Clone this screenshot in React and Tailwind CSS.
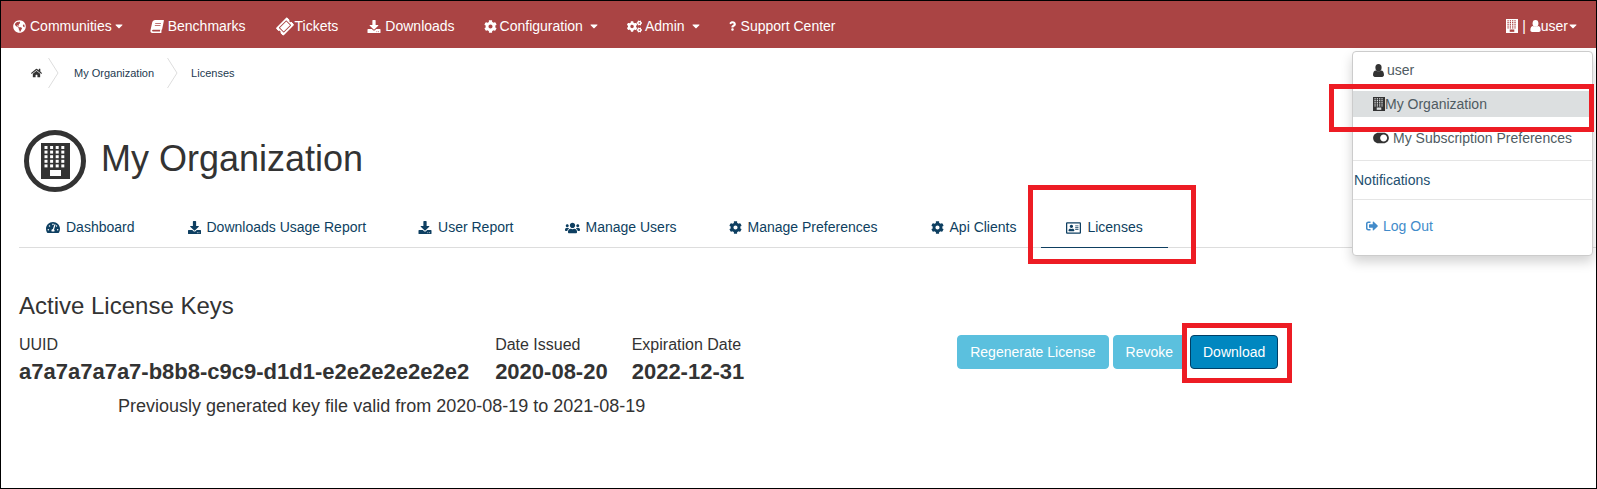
import React from "react";
import {
  FaGlobeAmericas, FaBook, FaTicketAlt, FaDownload, FaCog, FaCogs, FaQuestion, FaHome,
  FaTachometerAlt, FaUsers, FaToggleOn, FaRegAddressCard, FaSignOutAlt, FaCaretDown,
} from "react-icons/fa";

function Building({ className, body, hole }) {
  const dots = [];
  for (let r = 0; r < 5; r++) for (let c = 0; c < 4; c++) dots.push(<rect key={r + "-" + c} x={3.5 + c * 5.6} y={3 + r * 4.6} width="3" height="3" fill={hole} />);
  return (
    <svg viewBox="0 0 29 36" className={className} preserveAspectRatio="none">
      <rect width="29" height="36" fill={body} />
      {dots}
      <rect x="9" y="27" width="11" height="6" fill={hole} />
    </svg>
  );
}

function User({ className }) {
  return (
    <svg viewBox="0 0 12 14" className={className} fill="currentColor">
      <ellipse cx="6" cy="4" rx="3.4" ry="4" />
      <path d="M0 12 C0 8.5 1.5 7 3 7 C4 8 8 8 9 7 C10.5 7 12 8.5 12 12 C12 13.3 11 14 10 14 H2 C1 14 0 13.3 0 12Z" />
    </svg>
  );
}

function NavItem({ icon, text, caret, className, gap }) {
  return (
    <div className={"flex items-center " + className}>
      {icon}
      <span className={gap}>{text}</span>
      {caret}
    </div>
  );
}

function Tab({ icon, text, className, active }) {
  return (
    <div className={"relative flex h-full items-center gap-[6px] " + className}>
      {icon}
      <span>{text}</span>
      {active && <div className="absolute bottom-[-1px] left-[-25px] right-[-25px] h-px bg-[#0e3f61]" />}
    </div>
  );
}

function RedBox({ className }) {
  return <div className={"absolute border-[5px] border-[#ed1c24] " + className} />;
}

export default function App() {
  return (
    <div className="relative h-[489px] w-[1597px] overflow-hidden border border-black bg-white font-['Liberation_Sans',Arial,sans-serif] text-[#333]">
      <nav className="flex h-[47px] items-center bg-[#aa4444] pl-[12px] pr-[19px] pt-[3px] text-[14px] text-white">
        <NavItem icon={<FaGlobeAmericas className="h-[13px] w-[13px]" />} gap="ml-[4px]" text="Communities" caret={<FaCaretDown className="ml-[3px] h-[12px] w-[8px]" />} />
        <NavItem className="ml-[27px]" icon={<FaBook className="h-[13px] w-[14px] -skew-x-12" />} gap="ml-[4px]" text="Benchmarks" />
        <NavItem className="ml-[31px]" icon={<FaTicketAlt className="h-[15px] w-[16px] -rotate-45" />} gap="ml-[2px]" text="Tickets" />
        <NavItem className="ml-[29px]" icon={<FaDownload className="h-[13px] w-[14px]" />} gap="ml-[4px]" text="Downloads" />
        <NavItem className="ml-[29px]" icon={<FaCog className="h-[13px] w-[13px]" />} gap="ml-[3px]" text="Configuration" caret={<FaCaretDown className="ml-[7px] h-[12px] w-[8px]" />} />
        <NavItem className="ml-[29px]" icon={<FaCogs className="h-[13px] w-[15px]" />} gap="ml-[3px]" text="Admin" caret={<FaCaretDown className="ml-[7px] h-[12px] w-[8px]" />} />
        <NavItem className="ml-[29px]" icon={<FaQuestion className="h-[10px] w-[7px]" />} gap="ml-[5px]" text="Support Center" />
        <div className="ml-auto flex items-center">
          <Building className="h-[14px] w-[12px]" body="#ffffff" hole="#aa4444" />
          <span className="ml-[4px]">|</span>
          <User className="ml-[4px] h-[12px] w-[11px]" />
          <span>user</span>
          <FaCaretDown className="ml-[1px] h-[12px] w-[8px]" />
        </div>
      </nav>

      <div className="flex h-[50px] items-center pl-[30px] text-[11px] text-[#1d3a50]">
        <FaHome className="h-[10px] w-[11px] text-[#333]" />
        <svg viewBox="0 0 11 30" className="ml-[6px] h-[30px] w-[11px]" fill="none" stroke="#dddddd"><path d="M0.5 0 L10 15 L0.5 30" /></svg>
        <span className="ml-[15px]">My Organization</span>
        <svg viewBox="0 0 11 30" className="ml-[13px] h-[30px] w-[11px]" fill="none" stroke="#dddddd"><path d="M0.5 0 L10 15 L0.5 30" /></svg>
        <span className="ml-[13px]">Licenses</span>
      </div>

      <div className="mt-[32px] flex items-center pl-[23px]">
        <div className="flex h-[62px] w-[62px] items-center justify-center rounded-full border-[5px] border-[#333]">
          <Building className="h-[36px] w-[29px]" body="#333333" hole="#ffffff" />
        </div>
        <h1 className="ml-[15px] pb-[4px] text-[36px] leading-[40px]">My Organization</h1>
      </div>

      <div className="ml-[18px] mt-[12px] flex h-[44px] items-center border-b border-[#dddddd] pt-[4px] text-[14px] text-[#0e3f61]">
        <Tab className="ml-[27px]" icon={<FaTachometerAlt className="h-[13px] w-[14px]" />} text="Dashboard" />
        <Tab className="ml-[53px]" icon={<FaDownload className="h-[13px] w-[13px]" />} text="Downloads Usage Report" />
        <Tab className="ml-[52px]" icon={<FaDownload className="h-[13px] w-[14px]" />} text="User Report" />
        <Tab className="ml-[51px]" icon={<FaUsers className="h-[16px] w-[15px]" />} text="Manage Users" />
        <Tab className="ml-[52px]" icon={<FaCog className="h-[13px] w-[13px]" />} text="Manage Preferences" />
        <Tab className="ml-[53px]" icon={<FaCog className="h-[13px] w-[13px]" />} text="Api Clients" />
        <Tab className="ml-[50px]" active icon={<FaRegAddressCard className="h-[14px] w-[15px]" />} text="Licenses" />
      </div>

      <h2 className="ml-[18px] mt-[45px] text-[24px] leading-[26px]">Active License Keys</h2>

      <div className="mt-[16px] flex items-start pl-[18px]">
        <div>
          <div className="text-[16px] leading-[20px]">UUID</div>
          <div className="mt-[4px] text-[22px] font-bold leading-[26px]">a7a7a7a7a7-b8b8-c9c9-d1d1-e2e2e2e2e2e2</div>
        </div>
        <div className="ml-[26px]">
          <div className="text-[16px] leading-[20px]">Date Issued</div>
          <div className="mt-[4px] text-[22px] font-bold leading-[26px]">2020-08-20</div>
        </div>
        <div className="ml-[24px]">
          <div className="text-[16px] leading-[20px]">Expiration Date</div>
          <div className="mt-[4px] text-[22px] font-bold leading-[26px]">2022-12-31</div>
        </div>
        <div className="ml-[213px] flex text-[14px] text-white">
          <button className="h-[34px] rounded-[4px] border border-[#5bc0de] bg-[#5bc0de] px-[12px]">Regenerate License</button>
          <button className="ml-[4px] h-[34px] rounded-[4px] border border-[#5bc0de] bg-[#5bc0de] px-[12px]">Revoke</button>
          <button className="ml-[4px] h-[34px] rounded-[4px] border border-[#003f66] bg-[#0087c0] px-[12px]">Download</button>
        </div>
      </div>

      <p className="ml-[117px] mt-[9px] text-[18px] leading-[24px]">Previously generated key file valid from 2020-08-19 to 2021-08-19</p>

      <div className="absolute left-[1351px] top-[50px] flex h-[205px] w-[241px] flex-col rounded-[4px] border border-[#cccccc] bg-white pt-[5px] text-[14px] text-[#4f5b62] shadow-[0_6px_12px_rgba(0,0,0,0.175)]">
        <div className="flex h-[26px] items-center pl-[20px]">
          <User className="h-[13px] w-[11px] text-[#333]" />
          <span className="ml-[3px]">user</span>
        </div>
        <div className="mt-[8px] flex h-[26px] items-center bg-[#dcdfe0] pl-[20px]">
          <Building className="h-[14px] w-[12px]" body="#333333" hole="#dcdfe0" />
          <span>My Organization</span>
        </div>
        <div className="mt-[8px] flex h-[26px] items-center pl-[20px]">
          <FaToggleOn className="h-[14px] w-[16px] text-[#333]" />
          <span className="ml-[4px]">My Subscription Preferences</span>
        </div>
        <div className="mt-[9px] h-px bg-[#e5e5e5]" />
        <div className="flex h-[38px] items-center pl-[1px] text-[#23506f]">Notifications</div>
        <div className="h-px bg-[#e5e5e5]" />
        <div className="mt-[13px] flex h-[26px] items-center pl-[13px] text-[#428bca]">
          <FaSignOutAlt className="h-[12px] w-[12px]" />
          <span className="ml-[5px]">Log Out</span>
        </div>
      </div>

      <RedBox className="left-[1328px] top-[83px] h-[48px] w-[265px]" />
      <RedBox className="left-[1027px] top-[184px] h-[79px] w-[168px]" />
      <RedBox className="left-[1181px] top-[322px] h-[60px] w-[110px]" />
    </div>
  );
}
